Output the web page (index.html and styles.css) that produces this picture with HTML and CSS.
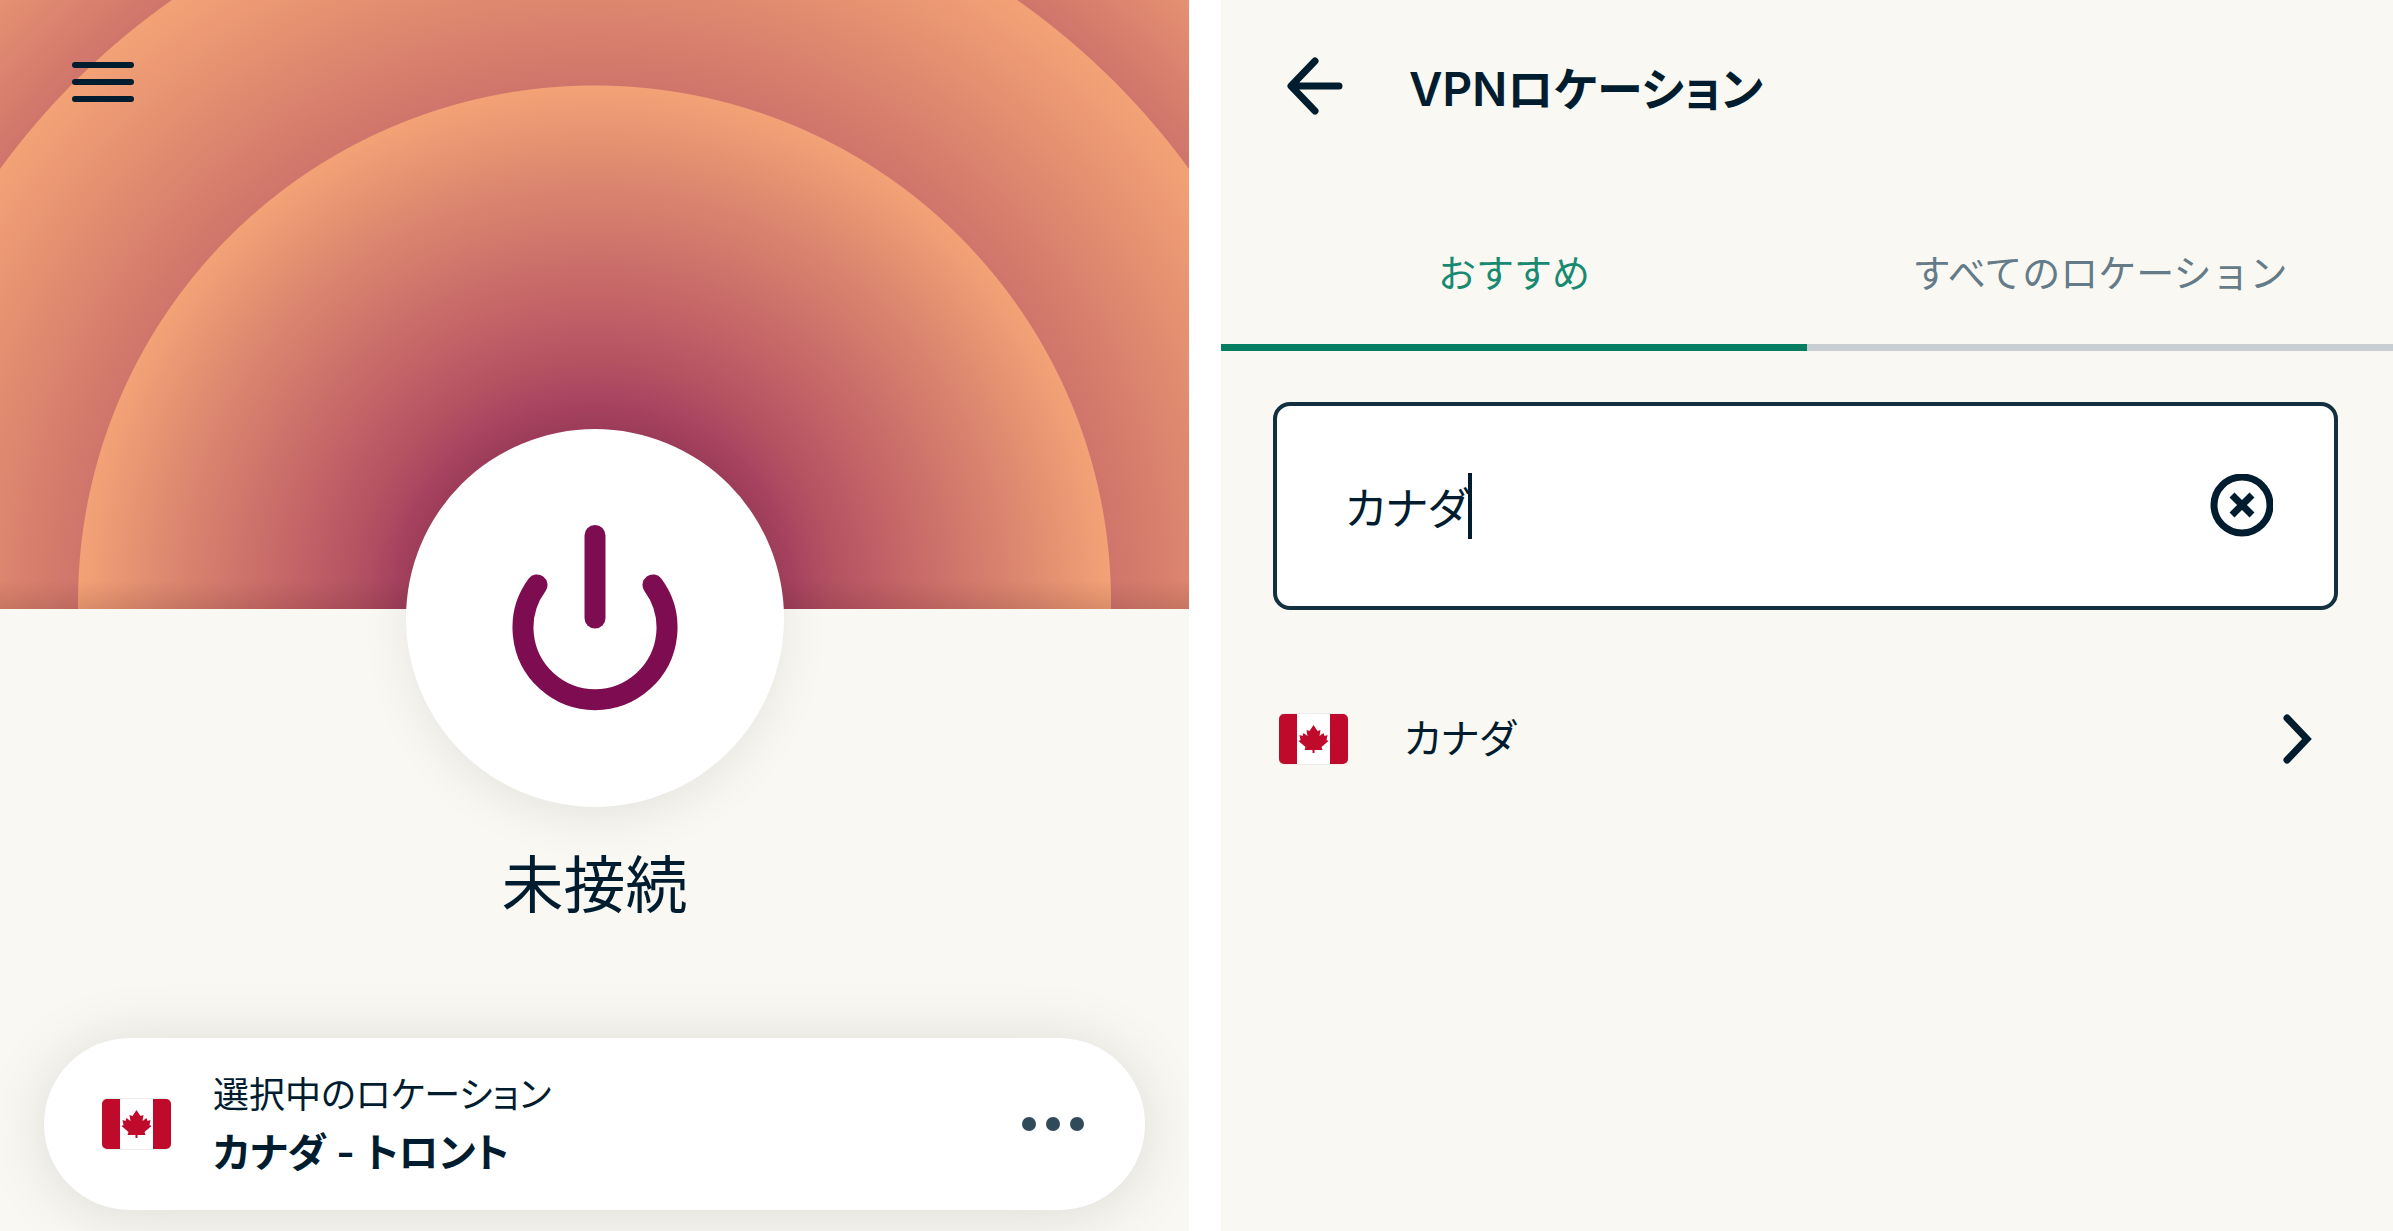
FILE: index.html
```html
<!DOCTYPE html>
<html lang="ja">
<head>
    <meta charset="UTF-8">
    <meta name="viewport" content="width=device-width, initial-scale=1.0">
    <title>VPN</title>
    <link rel="stylesheet" href="styles.css">
</head>
<body>
    <svg class="sprite" aria-hidden="true">
        <symbol id="flag-canada" viewBox="0 0 69 52">
            <rect x="0" y="0" width="69" height="52" rx="5" fill="#ececec"/>
            <rect x="17" y="1" width="35" height="50" fill="#fff"/>
            <path d="M5 1h13v50H5a5 5 0 0 1-5-5V6a5 5 0 0 1 5-5zM51 1h13a5 5 0 0 1 5 5v40a5 5 0 0 1-5 5H51z" fill="#c00a2c"/>
            <path d="M34.500 12l4 6 3-1-1 6 4-3 1 3 3-1-1 5 2 1-7 6 1 3-7 0h-1v3h-2v-3h-1l-7 0 1-3-7-6 2-1-1-5 3 1 1-3 4 3-1-6 3 1z" fill="#c00a2c"/>
        </symbol>
    </svg>

    <main class="screens">
        <!-- Главный экран -->
        <section class="panel home">
            <header class="hero">
                <button class="icon-button menu-button" aria-label="メニュー">
                    <svg width="62" height="42" viewBox="0 0 62 42" stroke="#001d2f" stroke-width="6" stroke-linecap="round">
                        <path d="M3 4h56M3 21h56M3 38h56"/>
                    </svg>
                </button>
            </header>

            <button class="power-button" aria-label="接続">
                <svg width="166" height="186" viewBox="0 0 166 186" fill="none" stroke="#7d0d50" stroke-width="21" stroke-linecap="round">
                    <path d="M83 10.500V93"/>
                    <path d="M25 60a72 72 0 1 0 116 0"/>
                </svg>
            </button>
            <p class="status">未接続</p>

            <div class="location-card">
                <svg class="flag"><use href="#flag-canada"/></svg>
                <div class="location-text">
                    <span>選択中のロケーション</span>
                    <strong>カナダ - トロント</strong>
                </div>
                <button class="icon-button" aria-label="その他">
                    <svg width="64" height="16" viewBox="0 0 64 16" fill="#304a5a">
                        <circle cx="8" cy="8" r="7"/>
                        <circle cx="32" cy="8" r="7"/>
                        <circle cx="56" cy="8" r="7"/>
                    </svg>
                </button>
            </div>
        </section>

        <!-- Экран выбора локации -->
        <section class="panel locations">
            <header class="title-bar">
                <button class="icon-button" aria-label="戻る">
                    <svg width="56" height="58" viewBox="0 0 56 58" fill="none" stroke="#001d2f" stroke-width="7" stroke-linecap="round" stroke-linejoin="round">
                        <path d="M52 29H5M28 4L4 29l24 25"/>
                    </svg>
                </button>
                <h1>VPNロケーション</h1>
            </header>

            <nav class="tabs">
                <button class="tab active">おすすめ</button>
                <button class="tab">すべてのロケーション</button>
            </nav>

            <label class="search">
                <input type="text" class="search-input" value="カナダ" aria-label="検索">
                <span class="caret"></span>
                <button class="icon-button clear-button" aria-label="クリア">
                    <svg width="64" height="64" viewBox="0 0 64 64" fill="none" stroke="#001d2f" stroke-width="7">
                        <circle cx="33" cy="31" r="28"/>
                        <path d="M23 21l20 20M43 21L23 41"/>
                    </svg>
                </button>
            </label>

            <a href="#" class="location-row">
                <svg class="flag"><use href="#flag-canada"/></svg>
                <span>カナダ</span>
                <svg class="chevron" width="30" height="50" viewBox="0 0 30 50" fill="none" stroke="#001d2f" stroke-width="7" stroke-linecap="round">
                    <path d="M4 4l20 21L4 46"/>
                </svg>
            </a>
        </section>
    </main>
</body>
</html>
```
FILE: styles.css
```css
/* Основные стили */
* {
    box-sizing: border-box;
}

body {
    margin: 0;
    background-color: #fff;
    color: #001d2f;
    font-family: Inter, "Noto Sans CJK JP", sans-serif;
    font-feature-settings: "palt";
}

button, input {
    font: inherit;
    font-feature-settings: inherit;
    color: inherit;
}

svg {
    display: block;
}

.sprite {
    display: none;
}

.icon-button {
    padding: 0;
    border: none;
    background: none;
    cursor: pointer;
}

.flag {
    flex: none;
    width: 69px;
    height: 52px;
}

/* Два экрана рядом */
.screens {
    display: grid;
    grid-template-columns: 1189fr 1172fr;
    gap: 32px;
    min-height: 100vh;
}

.panel {
    display: flex;
    flex-direction: column;
    min-width: 0;
    overflow: hidden;
    background-color: #f9f8f3;
}

/* Главный экран */
.home {
    align-items: center;
}

.hero {
    width: 100%;
    height: 609px;
    padding: 61px 72px;
    background:
        linear-gradient(rgba(80, 30, 30, 0) 580px, rgba(80, 30, 30, 0.15)),
        radial-gradient(circle at 50% 602px,
            #a03e5c 175px, #a84360 200px, #b45262 240px, #c46367 300px, #d1786c 370px, #de8a70 435px, #f3a276 516px,
            #d0756b 517px, #de896f 610px, #f3a276 735px,
            #d0756b 736px, #e69272 850px, #f3a276 957px);
}

.power-button {
    display: flex;
    justify-content: center;
    align-items: center;
    width: 378px;
    height: 378px;
    margin-top: -180px;
    padding: 0;
    border: none;
    border-radius: 50%;
    background-color: #fff;
    box-shadow: 0 12px 48px rgba(0, 0, 0, 0.08);
    cursor: pointer;
}

.status {
    margin: 34px 0 0;
    font-size: 62px;
    line-height: 90px;
}

.location-card {
    display: flex;
    align-items: center;
    gap: 42px;
    width: calc(100% - 88px);
    height: 172px;
    margin-top: 107px;
    padding: 0 60px 0 58px;
    border-radius: 86px;
    background-color: #fff;
    box-shadow: 0 4px 64px rgba(0, 0, 0, 0.12);
}

.location-text {
    flex: 1;
    display: flex;
    flex-direction: column;
    font-size: 36px;
    line-height: 58px;
}

.location-text strong {
    font-size: 40px;
    font-weight: 600;
}

/* Экран выбора локации */
.title-bar {
    display: flex;
    align-items: center;
    gap: 66px;
    height: 172px;
    padding: 0 66px;
}

.title-bar h1 {
    margin: 0;
    font-size: 46px;
    font-weight: 600;
}

.tabs {
    display: flex;
    height: 179px;
}

.tab {
    flex: 1;
    padding: 24px 0 0;
    border: none;
    border-bottom: 7px solid #c8ced1;
    background: none;
    color: #657b88;
    font-size: 38px;
    font-feature-settings: normal;
    cursor: pointer;
}

.tab.active {
    border-color: #067e62;
    color: #178a70;
}

.search {
    display: flex;
    align-items: center;
    height: 208px;
    margin: 51px 55px 0 52px;
    padding: 0 61px 0 68px;
    border: 4px solid #12303f;
    border-radius: 17px;
    background-color: #fff;
}

.search-input {
    field-sizing: content;
    padding: 0;
    border: none;
    outline: none;
    background: none;
    font-size: 44px;
}

.caret {
    width: 4px;
    height: 66px;
    background-color: #001d2f;
}

.clear-button {
    margin-left: auto;
}

.location-row {
    display: flex;
    align-items: center;
    gap: 56px;
    margin: 83px 80px 0 58px;
    color: inherit;
    font-size: 40px;
    line-height: 92px;
    text-decoration: none;
}

.chevron {
    margin-left: auto;
}
```
